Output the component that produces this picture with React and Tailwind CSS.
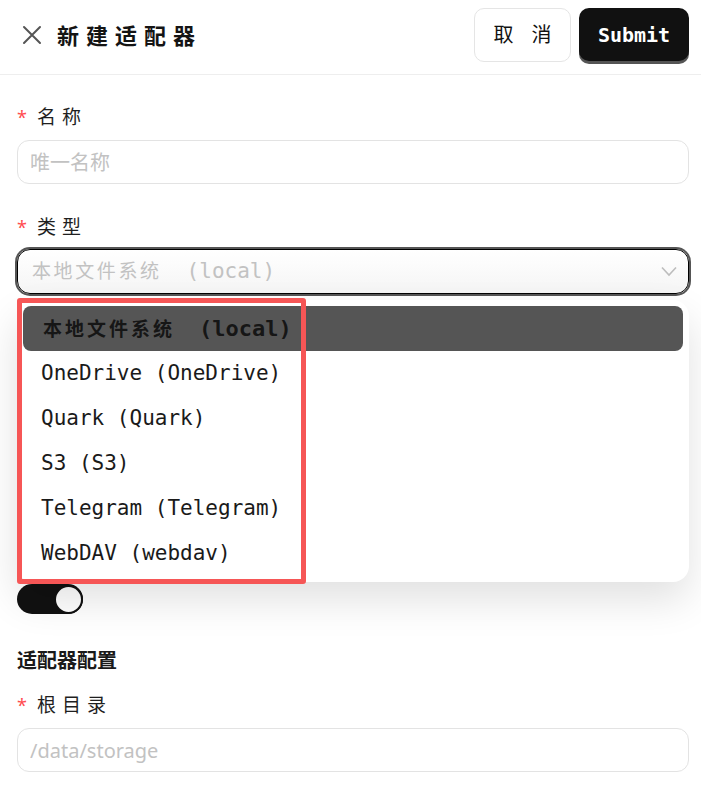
import { useState } from 'react'

const mono = { fontFamily: '"DejaVu Sans Mono", "Noto Sans CJK SC", monospace' }

const options = [
  { label: 'OneDrive (OneDrive)' },
  { label: 'Quark (Quark)' },
  { label: 'S3 (S3)' },
  { label: 'Telegram (Telegram)' },
  { label: 'WebDAV (webdav)' },
]

function Label({ children, className = '' }) {
  return (
    <div className={`flex items-center h-[28px] ${className}`}>
      <span className="text-[#ff4d4f] text-[18px] w-[20px] leading-none">*</span>
      <span className="text-[19px] tracking-[6px] text-[#1f1f1f]">{children}</span>
    </div>
  )
}

function TextInput({ placeholder, className = '' }) {
  return (
    <input
      placeholder={placeholder}
      className={`w-full h-[44px] rounded-[12px] border border-[#e3e3e3] px-[12px] text-[20px] placeholder:text-[#c2c2c2] outline-none ${className}`}
    />
  )
}

// CJK part and latin part of the label are spaced differently
function LocalLabel({ className = '', bold = false }) {
  return (
    <span className={className} style={mono}>
      <span className={`text-[19px] ${bold ? 'tracking-[3px]' : 'tracking-[2.6px]'}`}>本地文件系统</span>
      <span className={bold ? 'ml-[24px] text-[22px]' : 'ml-[25px] text-[21px]'}>(local)</span>
    </span>
  )
}

export default function App() {
  const [enabled] = useState(true)

  return (
    <div
      className="w-[701px] h-[810px] bg-white overflow-hidden relative"
      style={{ fontFamily: '"Noto Sans", "Noto Sans CJK SC", sans-serif' }}
    >
      {/* Header */}
      <div className="h-[75px] border-b border-[#eeeeee] flex items-start justify-between pl-[22px] pr-[12px] pt-[8px]">
        <div className="flex items-center h-[54px] gap-[15px]">
          <svg width="20" height="20" viewBox="0 0 20 20" fill="none" stroke="#555" strokeWidth="2" strokeLinecap="round">
            <path d="M2 2L18 18M18 2L2 18" />
          </svg>
          <span className="text-[22px] font-bold tracking-[7px] text-[#141414]">新建适配器</span>
        </div>
        <div className="flex gap-[8px]">
          <button
            className="w-[97px] h-[54px] rounded-[10px] border border-[#e5e5e5] bg-white text-[20px] tracking-[3px] text-[#111] pl-[3px]"
            style={mono}
          >
            取 消
          </button>
          <button
            className="w-[110px] h-[53px] rounded-[10px] bg-[#111] text-white text-[20px] font-bold shadow-[0_3px_0_#555]"
            style={mono}
          >
            Submit
          </button>
        </div>
      </div>

      {/* Form */}
      <div className="pl-[17px] pr-[12px] pt-[28px]">
        <Label>名称</Label>
        <TextInput placeholder="唯一名称" className="mt-[9px]" />

        <Label className="mt-[29px]">类型</Label>
        <div className="relative mt-[8px]">
          <div className="h-[45px] rounded-[13px] border border-black ring-2 ring-[#555] bg-gradient-to-b from-white to-[#f5f5f5] flex items-center justify-between pl-[14px] pr-[11px]">
            <LocalLabel className="text-[#c2c2c2]" />
            <svg width="16" height="11" viewBox="0 0 16 11" fill="none" stroke="#bdbdbd" strokeWidth="1.6">
              <path d="M1 1.5L8 9L15 1.5" />
            </svg>
          </div>

          {/* Dropdown menu */}
          <div className="absolute left-0 right-0 top-[51px] z-10 bg-white rounded-[16px] px-[6px] py-[6px] shadow-[0_18px_40px_rgba(0,0,0,0.12)]">
            <div className="h-[45px] rounded-[8px] bg-[#555] flex items-center pl-[20px]">
              <LocalLabel bold className="font-bold text-[#161616]" />
            </div>
            {options.map(o => (
              <div key={o.label} className="h-[45px] flex items-center pl-[18px]">
                <span className="text-[21px] text-[#1a1a1a]" style={mono}>{o.label}</span>
              </div>
            ))}
          </div>

          {/* Annotation box */}
          <div className="absolute left-[0px] top-[49px] w-[289px] h-[286px] z-20 border-[5px] border-[#f65656] rounded-[3px] pointer-events-none" />
        </div>

        <div className="mt-[290px]">
          <div className={`w-[66px] h-[30px] rounded-full flex items-center ${enabled ? 'bg-[#111] justify-end' : 'bg-gray-300 justify-start'}`}>
            <div className="w-[29px] h-[29px] rounded-full bg-white border-2 border-[#111]" />
          </div>
        </div>

        <div className="mt-[33px] h-[28px] flex items-center text-[20px] font-bold text-[#1a1a1a]">适配器配置</div>

        <Label className="mt-[16px]">根目录</Label>
        <TextInput placeholder="/data/storage" className="mt-[9px]" />
      </div>
    </div>
  )
}
